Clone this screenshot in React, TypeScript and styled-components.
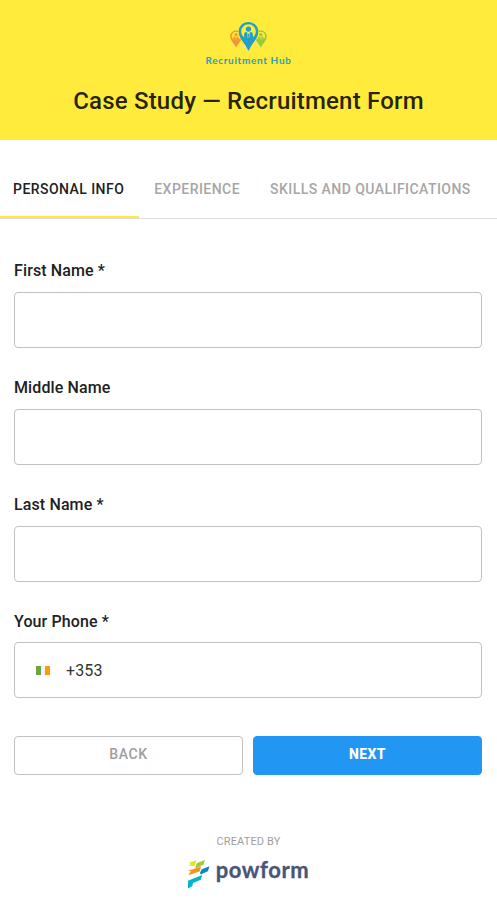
import React from "react";
import styled, { createGlobalStyle } from "styled-components";

const GlobalStyle = createGlobalStyle`
  *, *::before, *::after { box-sizing: border-box; }
  body { margin: 0; background: #fff; color: #212121; font-family: Roboto, "Liberation Sans", sans-serif; }
  button, input { font-family: inherit; }
`;

const Page = styled.main`
  height: 906px;
  overflow: hidden;
  background: #fff;
`;

const Header = styled.header`
  display: flex;
  flex-direction: column;
  align-items: center;
  height: 140px;
  padding-top: 21px;
  background: #ffeb3b;
`;

const Brand = styled.div`
  display: flex;
  flex-direction: column;
  align-items: center;
  height: 46px;
`;

const BrandName = styled.span`
  margin-top: 2px;
  color: #2ba0b4;
  font: 700 10px/14px Lato, sans-serif;
  letter-spacing: 0.65px;
  white-space: nowrap;
`;

const Title = styled.h1`
  margin: 18px 0 0;
  color: rgba(0, 0, 0, 0.87);
  font-size: 24px;
  font-weight: 500;
  line-height: 32px;
  letter-spacing: 0.2px;
  white-space: nowrap;
`;

const Tabs = styled.nav`
  display: flex;
  height: 79px;
  border-bottom: 1px solid #dedede;
`;

const Tab = styled.button<{ $active?: boolean }>`
  height: 78px;
  padding: 21px 15px 0;
  border: 0;
  border-bottom: 2px solid ${(p) => (p.$active ? "#ffeb3b" : "transparent")};
  background: none;
  color: ${(p) => (p.$active ? "#212121" : "#a6a6a6")};
  font-size: 14px;
  font-weight: 500;
  line-height: 16px;
  letter-spacing: 0.45px;
  white-space: nowrap;
  &:first-child { padding-left: 13px; }
`;

const Form = styled.form`
  padding: 39px 15px 0 14px;
`;

const Field = styled.label`
  display: block;
  height: 116.8px;
`;

const Label = styled.span`
  display: block;
  height: 34px;
  padding-top: 1.4px;
  font-size: 16px;
  font-weight: 500;
  line-height: 24px;
  letter-spacing: 0.12px;
`;

const InputBox = styled.span`
  display: flex;
  align-items: center;
  height: 56px;
  padding: 0 21px;
  border: 1px solid #c1c1c1;
  border-radius: 4px;
`;

const Input = styled.input`
  flex: 1;
  min-width: 0;
  padding: 0;
  border: 0;
  outline: 0;
  background: none;
  color: #333;
  font-size: 16px;
  font-weight: 400;
  letter-spacing: 0.15px;
`;

const Flag = styled.span`
  width: 14px;
  height: 9px;
  margin-right: 16px;
  background: linear-gradient(90deg, #6da544 0 4.7px, #f4f4f4 4.7px 9.3px, #ff9811 9.3px);
`;

const Actions = styled.div`
  display: grid;
  grid-template-columns: 1fr 1fr;
  gap: 10px;
  margin-top: 10.8px;
`;

const Button = styled.button<{ $primary?: boolean }>`
  height: 39px;
  padding: 0 0 3px;
  border: 1px solid ${(p) => (p.$primary ? "#2196f3" : "#c1c1c1")};
  border-radius: 4px;
  background: ${(p) => (p.$primary ? "#2196f3" : "#fff")};
  color: ${(p) => (p.$primary ? "#fff" : "#9e9e9e")};
  font-size: 14px;
  font-weight: ${(p) => (p.$primary ? 800 : 500)};
  letter-spacing: ${(p) => (p.$primary ? "0.4px" : "0.6px")};
`;

const Footer = styled.footer`
  display: flex;
  flex-direction: column;
  align-items: center;
  margin-top: 59px;
`;

const Caption = styled.span`
  color: #9e9e9e;
  font-size: 11px;
  line-height: 16px;
  letter-spacing: 0.15px;
`;

const Powered = styled.div`
  display: flex;
  align-items: flex-start;
  gap: 5px;
  margin-top: 10px;
`;

const Wordmark = styled.span`
  margin-top: -4px;
  color: #475577;
  font: 700 22px/28px Lato, sans-serif;
  letter-spacing: 0.6px;
  -webkit-text-stroke: 0.3px #475577;
`;

const Pin = ({ color }: { color: string }) => (
  <>
    <path
      fillRule="evenodd"
      fill={color}
      d="M10.5 0C4.7 0 0 4.5 0 10.3C0 18 6.5 22 10.5 31C14.5 22 21 18 21 10.3C21 4.5 16.3 0 10.5 0ZM10.5 2.5C14.9 2.5 18.3 6 18.3 10.2C18.3 14.4 14.9 17.9 10.5 17.9C6.1 17.9 2.7 14.4 2.7 10.2C2.7 6 6.1 2.5 10.5 2.5Z"
    />
    <circle cx="10.5" cy="7.6" r="2.8" fill={color} />
    <path fill={color} d="M5.8 17V13.2Q5.8 10.8 8.4 10.8L10.5 13L12.6 10.8Q15.2 10.8 15.2 13.2V17L10.5 19Z" />
    <path stroke="#ffeb3b" strokeWidth="0.5" fill="none" d="M9.2 11.2L9.8 17M11.8 11.2L11.2 17" />
  </>
);

const PinsLogo = () => (
  <svg width="41" height="32" viewBox="0 0 41 32" aria-hidden="true">
    <path fill="#e9e4b3" d="M0 23L5 24L7 28ZM9 25L17 26L20 31ZM27 24L32 25L34 28Z" />
    <g transform="translate(1 10) scale(.6)"><Pin color="#f7942d" /></g>
    <g transform="translate(27.4 10) scale(.6)"><Pin color="#98c93c" /></g>
    <path fill="#ffeb3b" d="M9.5 11.5C9.5 5 14 .5 20.5 .5S31.5 5 31.5 11.5C31.5 19 26 23 21 31C16 23 9.5 19 9.5 11.5Z" />
    <g transform="translate(10 1)"><Pin color="#24a0c4" /></g>
  </svg>
);

const PowformMark = () => (
  <svg width="23" height="29" viewBox="0 0 23 29" aria-hidden="true">
    <path fill="#e1e619" d="M.8 2.7L8.4 .2L7 5L5.2 6L.6 5.6L3 4Z" />
    <path fill="#a0cd35" d="M9 3L17 0L15.5 4.8L8 8.2L7.4 7Z" />
    <path fill="#f7941d" d="M0 10.8L13 6.5L11.6 11.4L1.6 14.8L.4 14.2L3.2 11.6Z" />
    <path fill="#0784d5" d="M13.8 9.2L21.5 6.3L19.9 11.2L12.6 14.5L12 12.8Z" />
    <path fill="#00b5cc" d="M0 20.8L14.2 15.1L12.8 19.7L5 23L4.2 26.3L0 28.4Z" />
  </svg>
);

const textFields = ["First Name *", "Middle Name", "Last Name *"];

export default function App() {
  return (
    <Page>
      <GlobalStyle />
      <Header>
        <Brand>
          <PinsLogo />
          <BrandName>Recruitment Hub</BrandName>
        </Brand>
        <Title>Case Study — Recruitment Form</Title>
      </Header>
      <Tabs>
        <Tab $active>PERSONAL INFO</Tab>
        <Tab>EXPERIENCE</Tab>
        <Tab>SKILLS AND QUALIFICATIONS</Tab>
      </Tabs>
      <Form onSubmit={(e) => e.preventDefault()}>
        {textFields.map((name) => (
          <Field key={name}>
            <Label>{name}</Label>
            <InputBox><Input type="text" /></InputBox>
          </Field>
        ))}
        <Field>
          <Label>Your Phone *</Label>
          <InputBox>
            <Flag />
            <Input type="tel" defaultValue="+353" />
          </InputBox>
        </Field>
        <Actions>
          <Button type="button">BACK</Button>
          <Button type="submit" $primary>NEXT</Button>
        </Actions>
      </Form>
      <Footer>
        <Caption>CREATED BY</Caption>
        <Powered>
          <PowformMark />
          <Wordmark>powform</Wordmark>
        </Powered>
      </Footer>
    </Page>
  );
}
